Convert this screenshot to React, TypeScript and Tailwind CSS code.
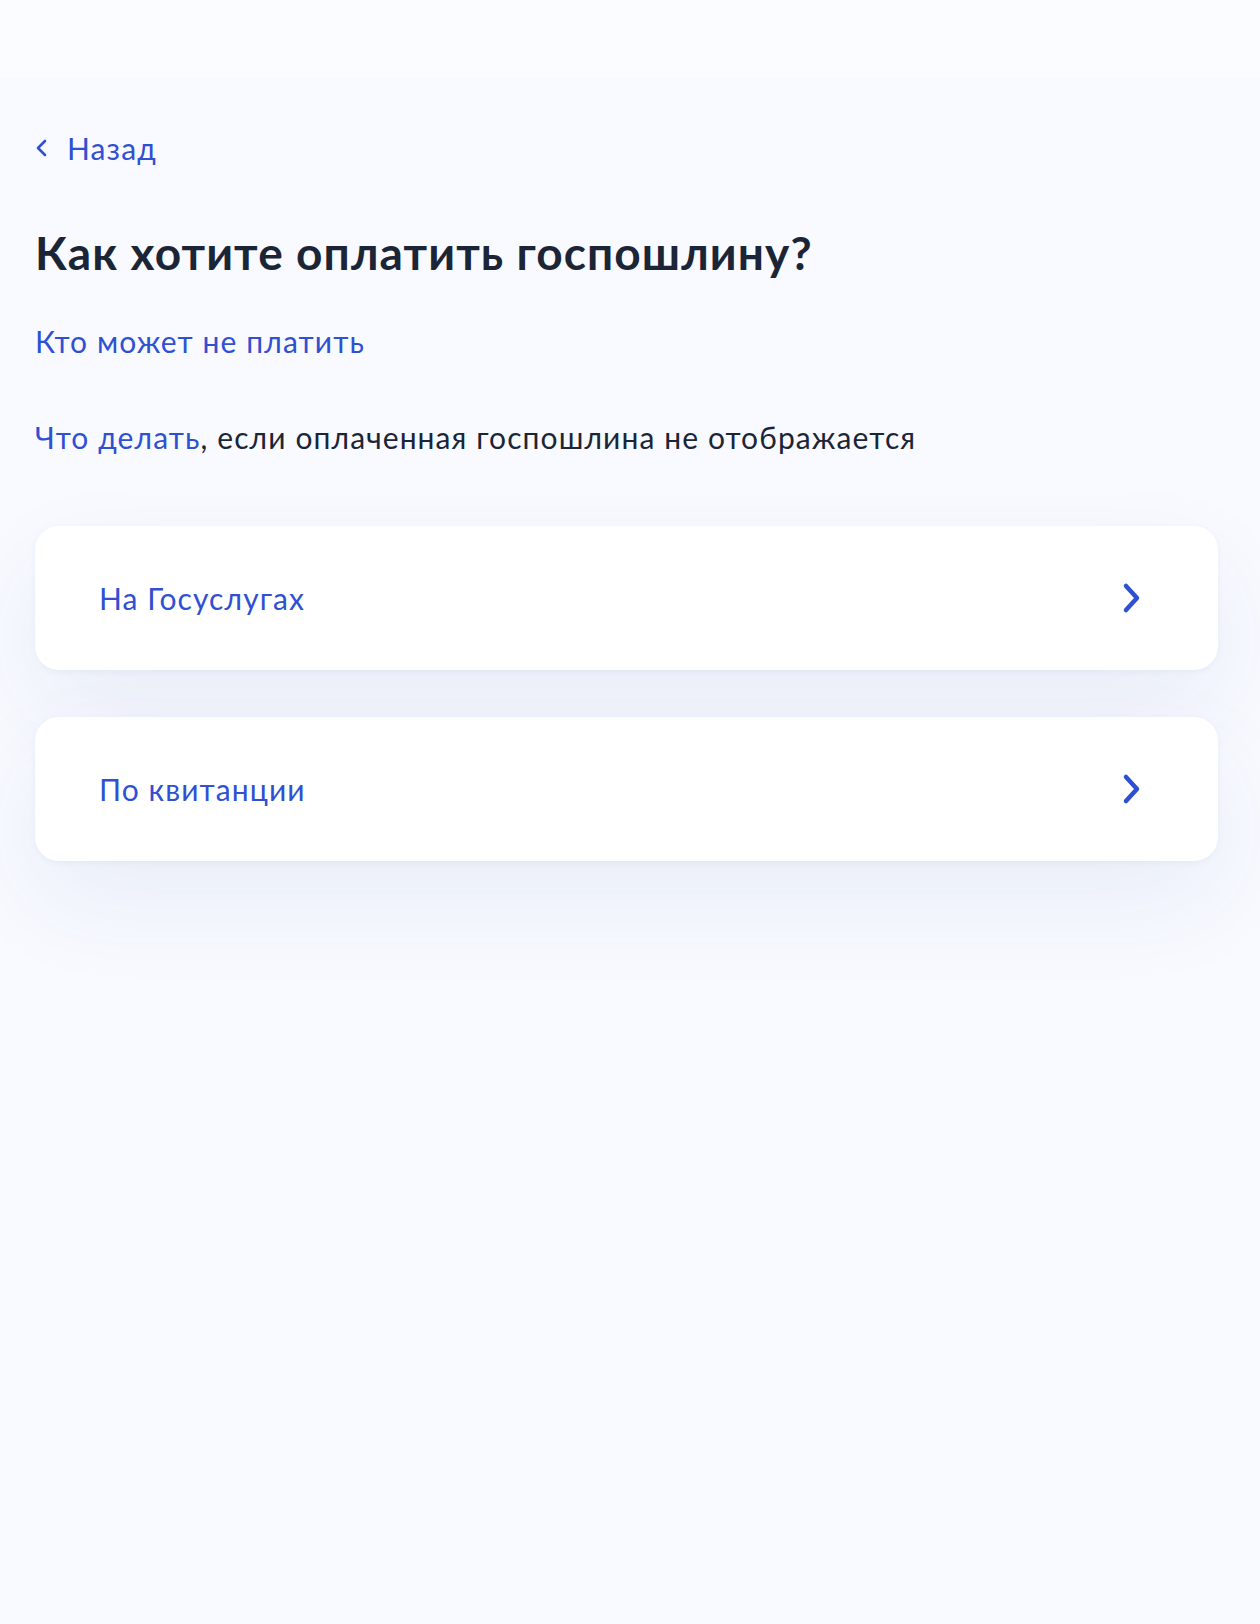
import { useState } from 'react';

const OPTIONS = [
  { id: 'online', label: 'На Госуслугах' },
  { id: 'receipt', label: 'По квитанции' },
];

function ChevronRight() {
  return (
    <svg width="20" height="34" viewBox="0 0 20 34" fill="none">
      <path
        d="M4 5 L15 17 L4 29"
        stroke="#3050d2"
        strokeWidth="4.5"
        strokeLinecap="round"
        strokeLinejoin="round"
      />
    </svg>
  );
}

function ChevronLeft() {
  return (
    <svg width="14" height="20" viewBox="0 0 14 20" fill="none">
      <path
        d="M10 3 L3 10 L10 17"
        stroke="#3050d2"
        strokeWidth="2.6"
        strokeLinecap="round"
        strokeLinejoin="round"
      />
    </svg>
  );
}

export default function App() {
  const [selected, setSelected] = useState<string | null>(null);

  return (
    <div
      className="min-h-[1624px] bg-[#f8faff] text-[#1b2536] tracking-[1.1px]"
      style={{ fontFamily: 'Lato, "Noto Sans", sans-serif' }}
    >
      {/* Top bar */}
      <header className="h-[77px] bg-[#fafcff]" />

      <main className="pl-[35px] pr-[42px]">
        {/* Back link */}
        <button className="mt-[53px] flex items-center gap-[18px] text-[30px] leading-[36px] text-[#3050d2] cursor-pointer">
          <ChevronLeft />
          <span>Назад</span>
        </button>

        <h1 className="mt-[59px] text-[46px] leading-[56px] font-bold tracking-[1.1px] text-[#1b2536]">
          Как хотите оплатить госпошлину?
        </h1>

        <a href="#" className="mt-[42px] block text-[30px] leading-[36px] text-[#3050d2]">
          Кто может не платить
        </a>

        <p className="mt-[60px] text-[30px] leading-[36px]">
          <a href="#" className="text-[#3050d2]">
            Что делать
          </a>
          , если оплаченная госпошлина не отображается
        </p>

        {/* Payment options */}
        <div className="mt-[71px] flex flex-col gap-[47px]">
          {OPTIONS.map((opt) => (
            <button
              key={opt.id}
              onClick={() => setSelected(opt.id)}
              className={`flex h-[144px] w-full items-center justify-between rounded-[24px] bg-white pl-[64px] pr-[76px] text-left shadow-[0_2px_6px_rgba(40,70,160,0.05),0_40px_100px_rgba(40,70,160,0.07)] cursor-pointer ${
                selected === opt.id ? 'ring-2 ring-[#3050d2]' : ''
              }`}
            >
              <span className="text-[30px] leading-[36px] text-[#3050d2]">{opt.label}</span>
              <ChevronRight />
            </button>
          ))}
        </div>
      </main>
    </div>
  );
}
